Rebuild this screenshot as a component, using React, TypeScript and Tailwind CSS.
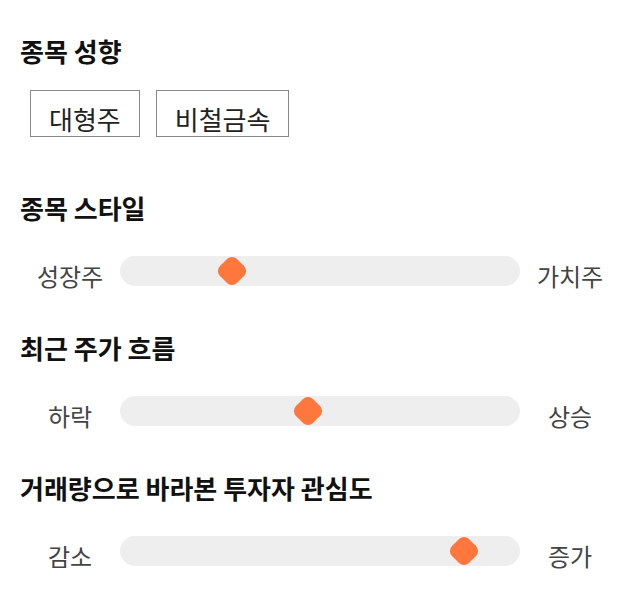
import React from "react";

const FONT = { fontFamily: '"Noto Sans CJK KR", "Noto Sans", sans-serif' };

type SliderRow = { title: string; left: string; right: string; value: number };

const ROWS: SliderRow[] = [
  { title: "종목 스타일", left: "성장주", right: "가치주", value: 28 },
  { title: "최근 주가 흐름", left: "하락", right: "상승", value: 47 },
  { title: "거래량으로 바라본 투자자 관심도", left: "감소", right: "증가", value: 86 },
];

function Heading({ children }: { children: React.ReactNode }) {
  return <h2 className="text-[26px] font-bold leading-[32px] text-[#111]">{children}</h2>;
}

function RangeRow({ left, right, value }: SliderRow) {
  return (
    <div className="grid w-[600px] grid-cols-[100px_1fr_100px] items-center">
      <span className="translate-y-[5px] text-center text-[24px] leading-[30px] text-[#444]">{left}</span>
      <div className="relative h-[30px] rounded-full bg-[#eeeeee]">
        <div
          className="absolute top-1/2 size-6 -translate-x-1/2 -translate-y-1/2 rotate-45 rounded-[7px] bg-[#ff773d]"
          style={{ left: `${value}%` }}
        />
      </div>
      <span className="translate-y-[5px] text-center text-[24px] leading-[30px] text-[#444]">{right}</span>
    </div>
  );
}

export default function App() {
  return (
    <div className="min-h-[606px] w-[640px] bg-white pl-5 pt-[35px]" style={FONT}>
      <Heading>종목 성향</Heading>
      <div className="mt-[23px] flex gap-4 pl-[10px]">
        {["대형주", "비철금속"].map((tag) => (
          <span
            key={tag}
            className="flex h-[47px] items-center border border-[#888] px-[18px] pt-[10px] text-[26px] leading-[30px] text-[#222]"
          >
            {tag}
          </span>
        ))}
      </div>
      {ROWS.map((row, i) => (
        <section key={row.title} className={i === 0 ? "mt-[55px]" : "mt-[46px]"}>
          <Heading>{row.title}</Heading>
          <div className="mt-8">
            <RangeRow {...row} />
          </div>
        </section>
      ))}
    </div>
  );
}
